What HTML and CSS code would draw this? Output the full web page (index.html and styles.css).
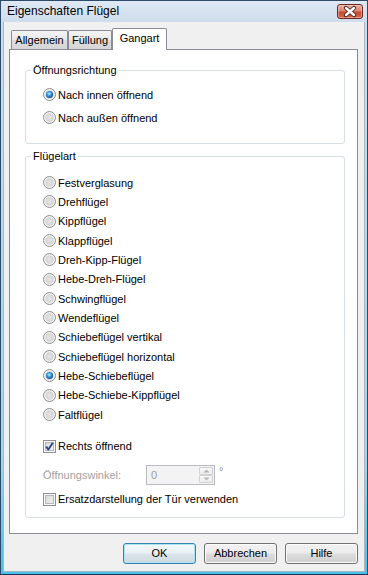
FILE: index.html
```html
<!DOCTYPE html>
<html lang="de">
<head>
<meta charset="utf-8">
<title>Eigenschaften Flügel</title>
<link rel="stylesheet" href="styles.css">
</head>
<body>
<div class="window">
  <div class="titlebar">
    <span class="title">Eigenschaften Flügel</span>
    <span class="close">
      <svg width="24" height="13" viewBox="0 0 24 13">
        <path d="M8 3 L16 10 M16 3 L8 10" stroke="#4a1c18" stroke-width="4.2" stroke-linecap="round" fill="none"/>
        <path d="M8 3 L16 10 M16 3 L8 10" stroke="#ffffff" stroke-width="2.4" stroke-linecap="round" fill="none"/>
      </svg>
    </span>
  </div>
  <div class="client">
    <div class="tabs">
      <div class="tab t1">Allgemein</div>
      <div class="tab t2">Füllung</div>
      <div class="tab sel t3">Gangart</div>
    </div>
    <div class="panel">
      <fieldset class="group g1">
        <legend>Öffnungsrichtung</legend>
        <div class="list">
          <div class="opt"><span class="radio on"></span><span>Nach innen öffnend</span></div>
          <div class="opt"><span class="radio"></span><span>Nach außen öffnend</span></div>
        </div>
      </fieldset>
      <fieldset class="group g2">
        <legend>Flügelart</legend>
        <div class="list">
          <div class="opt"><span class="radio"></span><span>Festverglasung</span></div>
          <div class="opt"><span class="radio"></span><span>Drehflügel</span></div>
          <div class="opt"><span class="radio"></span><span>Kippflügel</span></div>
          <div class="opt"><span class="radio"></span><span>Klappflügel</span></div>
          <div class="opt"><span class="radio"></span><span>Dreh-Kipp-Flügel</span></div>
          <div class="opt"><span class="radio"></span><span>Hebe-Dreh-Flügel</span></div>
          <div class="opt"><span class="radio"></span><span>Schwingflügel</span></div>
          <div class="opt"><span class="radio"></span><span>Wendeflügel</span></div>
          <div class="opt"><span class="radio"></span><span>Schiebeflügel vertikal</span></div>
          <div class="opt"><span class="radio"></span><span>Schiebeflügel horizontal</span></div>
          <div class="opt"><span class="radio on"></span><span>Hebe-Schiebeflügel</span></div>
          <div class="opt"><span class="radio"></span><span>Hebe-Schiebe-Kippflügel</span></div>
          <div class="opt"><span class="radio"></span><span>Faltflügel</span></div>
          <div class="opt chkrow r1">
            <span class="check">
              <svg width="11" height="11" viewBox="0 0 11 11"><path d="M2.2 5.6 L4.4 8.6 L8.8 1.8" stroke="#2b4186" stroke-width="1.8" fill="none" stroke-linejoin="round"/></svg>
            </span>
            <span>Rechts öffnend</span>
          </div>
          <div class="anglerow">
            <span class="anglelabel">Öffnungswinkel:</span>
            <span class="spin">
              <span class="val">0</span>
              <span class="spinbtns">
                <span class="sb"><svg width="7" height="4" viewBox="0 0 7 4"><path d="M0.5 3.5 L3.5 0.5 L6.5 3.5 Z" fill="#b4b4b4"/></svg></span>
                <span class="sb"><svg width="7" height="4" viewBox="0 0 7 4"><path d="M0.5 0.5 L3.5 3.5 L6.5 0.5 Z" fill="#b4b4b4"/></svg></span>
              </span>
            </span>
            <span class="deg">°</span>
          </div>
          <div class="opt chkrow r2"><span class="check"></span><span>Ersatzdarstellung der Tür verwenden</span></div>
        </div>
      </fieldset>
    </div>
    <div class="buttons">
      <span class="btn default">OK</span>
      <span class="btn">Abbrechen</span>
      <span class="btn">Hilfe</span>
    </div>
  </div>
</div>
</body>
</html>
```

FILE: styles.css
```css
* { box-sizing: border-box; }
html, body { margin: 0; padding: 0; background: #ffffff; }
body {
  font-family: "Liberation Sans", Arial, sans-serif;
  font-size: 11px;
  color: #000;
}
.window {
  width: 368px;
  height: 575px;
  border: 1px solid #2d4a68;
  border-bottom-color: #1d3550;
  background: linear-gradient(#c9dff0, #9fd6ef 80%, #45c2ea);
  display: flex;
  flex-direction: column;
}
.titlebar {
  height: 21px;
  flex: none;
  display: flex;
  align-items: flex-start;
  padding-left: 6px;
  background: linear-gradient(#dfe9f5, #cfdcec);
}
.title {
  font-size: 12px;
  line-height: 21px;
  color: #000;
}
.close {
  margin-left: auto;
  margin-right: 4px;
  margin-top: 3px;
  width: 26px;
  height: 15px;
  border: 1px solid #6a2822;
  border-radius: 3px;
  background: linear-gradient(#eab2a4 0%, #dc8670 45%, #c84a2e 55%, #d4684a 100%);
  box-shadow: inset 0 0 0 1px rgba(255, 220, 210, 0.45);
  display: flex;
  align-items: center;
  justify-content: center;
}
.client {
  flex: 1;
  margin: 0 2px 2px 2px;
  border: 1px solid #a9b5c2;
  border-top: none;
  background: #f0f0f0;
  padding: 6px 6px 7px 5px;
  display: flex;
  flex-direction: column;
}
.tabs {
  height: 21px;
  flex: none;
  display: flex;
  align-items: flex-end;
  padding-left: 2px;
  position: relative;
  z-index: 1;
}
.tab {
  height: 19px;
  border: 1px solid #898c95;
  border-bottom: none;
  border-radius: 2px 2px 0 0;
  background: linear-gradient(#f4f4f4, #e8e8e8 50%, #dddddd 51%, #d6d6d6);
  text-align: center;
  line-height: 18px;
  color: #000;
}
.t1 { width: 57px; }
.t2 { width: 44px; }
.t3 { width: 55px; }
.tab.sel {
  height: 22px;
  margin-bottom: -1px;
  background: #ffffff;
  line-height: 19px;
}
.panel {
  height: 485px;
  flex: none;
  border: 1px solid #898c95;
  background: #ffffff;
  padding: 13px 12px 0 15px;
}
.group {
  margin: 0;
  padding: 0;
  border: 1px solid #d5dfe5;
  border-radius: 3px;
  min-width: 0;
}
.group legend {
  margin-left: 5px;
  padding: 0 2px;
  line-height: 15px;
  height: 15px;
}
.g1 .list { padding: 5px 0 14px 17px; }
.g1 .opt { height: 23px; }
.g2 { margin-top: 5px; }
.g2 .list { padding: 9px 0 8px 17px; }
.g2 .opt { height: 19.333px; }
.opt {
  display: flex;
  align-items: center;
  gap: 2px;
}
.radio {
  flex: none;
  width: 13px;
  height: 13px;
  border-radius: 50%;
  border: 1px solid #8b8d8f;
  background: radial-gradient(circle at 50% 50%, #e6e6e6 0, #d6d6d6 45%, #f4f4f4 80%, #ffffff 100%);
  box-shadow: inset 0 0 0 1px #f6f6f6;
  display: flex;
  align-items: center;
  justify-content: center;
}
.radio.on::after {
  content: "";
  width: 7px;
  height: 7px;
  border-radius: 50%;
  background: radial-gradient(circle at 45% 40%, #bff0ff 0, #4aaae6 30%, #15589f 65%, #0e3566 100%);
}
.check {
  flex: none;
  width: 13px;
  height: 13px;
  border: 1px solid #8e8f8f;
  background: linear-gradient(135deg, #d3d3d3, #f7f7f7);
  box-shadow: inset 0 0 0 1px #fbfbfb, inset 0 0 0 2px #b4b9be;
  display: flex;
  align-items: center;
  justify-content: center;
}
.g2 .chkrow { height: 20px; }
.r1 { margin-top: 12px; }
.r2 { margin-top: 3px; }
.anglerow {
  margin-top: 8px;
  height: 22px;
  display: flex;
  align-items: center;
}
.anglelabel {
  width: 103px;
  color: #a2a2a2;
}
.spin {
  width: 69px;
  height: 20px;
  border: 1px solid #b9bdc1;
  background: #f3f3f3;
  display: flex;
}
.val {
  flex: 1;
  padding-left: 4px;
  line-height: 18px;
  color: #9f9f9f;
}
.spinbtns {
  width: 16px;
  display: flex;
  flex-direction: column;
  padding: 1px;
  gap: 0;
}
.sb {
  flex: 1;
  border: 1px solid #d2d2d2;
  border-radius: 1px;
  background: linear-gradient(#f8f8f8, #ececec);
  display: flex;
  align-items: center;
  justify-content: center;
}
.deg {
  align-self: flex-start;
  margin-left: 4px;
  margin-top: 1px;
  color: #8a8a8a;
  line-height: 12px;
}
.buttons {
  margin-top: 9px;
  height: 21px;
  flex: none;
  display: flex;
  justify-content: flex-end;
  gap: 8px;
}
.btn {
  width: 73px;
  height: 21px;
  border: 1px solid #707070;
  border-radius: 3px;
  background: linear-gradient(#f2f2f2 0%, #ebebeb 48%, #dddddd 52%, #cfcfcf 100%);
  box-shadow: inset 0 0 0 1px #fcfcfc;
  text-align: center;
  line-height: 19px;
  color: #000;
}
.btn.default {
  border-color: #3c7fb1;
  box-shadow: inset 0 0 0 1px #aee3f7;
  background: linear-gradient(#f4f8fa 0%, #e9f1f5 48%, #dbe5ea 52%, #cfdbe1 100%);
}
```
